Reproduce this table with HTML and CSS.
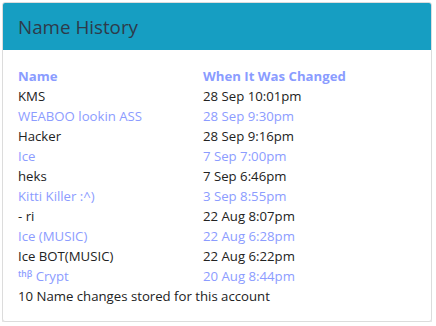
FILE: index.html
```html
<!DOCTYPE html>
<html>
<head>
<meta charset="utf-8">
<link rel="stylesheet" href="styles.css">
</head>
<body>
<div class="card">
  <div class="card-header">Name History</div>
  <div class="card-body">
    <table class="history">
      <thead>
        <tr><th>Name</th><th>When It Was Changed</th></tr>
      </thead>
      <tbody>
        <tr><td>KMS</td><td>28 Sep 10:01pm</td></tr>
        <tr class="alt"><td>WEABOO lookin ASS</td><td>28 Sep 9:30pm</td></tr>
        <tr><td>Hacker</td><td>28 Sep 9:16pm</td></tr>
        <tr class="alt"><td>Ice</td><td>7 Sep 7:00pm</td></tr>
        <tr><td>heks</td><td>7 Sep 6:46pm</td></tr>
        <tr class="alt"><td>Kitti Killer :^)</td><td>3 Sep 8:55pm</td></tr>
        <tr><td>- ri</td><td>22 Aug 8:07pm</td></tr>
        <tr class="alt"><td>Ice (MUSIC)</td><td>22 Aug 6:28pm</td></tr>
        <tr><td>Ice BOT(MUSIC)</td><td>22 Aug 6:22pm</td></tr>
        <tr class="alt"><td><span class="sup">thβ</span> Crypt</td><td>20 Aug 8:44pm</td></tr>
      </tbody>
    </table>
    <div class="footer">10 Name changes stored for this account</div>
  </div>
</div>
</body>
</html>
```
FILE: styles.css
```css
html, body {
  margin: 0;
  padding: 0;
  background: #ffffff;
}
body {
  padding: 2px 4px 0 2px;
  font-family: "Open Sans", "Noto Sans", sans-serif;
  color: #222;
}
.card {
  border: 1px solid #dcdcdc;
  border-radius: 3px;
  box-shadow: 0 4px 0 #e6e6e6;
  background: #fff;
  overflow: hidden;
}
.card-header {
  background: #169ec2;
  color: #2e3a4a;
  font-size: 18.8px;
  height: 47px;
  line-height: 48px;
  padding-left: 15px;
}
.card-body {
  padding: 16px 15px 15px 15px;
  font-size: 13.2px;
}
.history {
  border-collapse: collapse;
  width: 100%;
}
.history th, .history td {
  padding: 0;
  height: 20px;
  line-height: 19px;
  text-align: left;
  vertical-align: middle;
  white-space: nowrap;
}
.history th {
  color: #8a9cff;
  font-weight: 700;
}
.history th:first-child, .history td:first-child {
  width: 185px;
}
.history tr.alt td {
  color: #8c9cff;
}
.sup {
  font-size: 8.5px;
  font-weight: 600;
  vertical-align: 4px;
  line-height: 0;
}
.footer {
  line-height: 20px;
  height: 20px;
}
```
